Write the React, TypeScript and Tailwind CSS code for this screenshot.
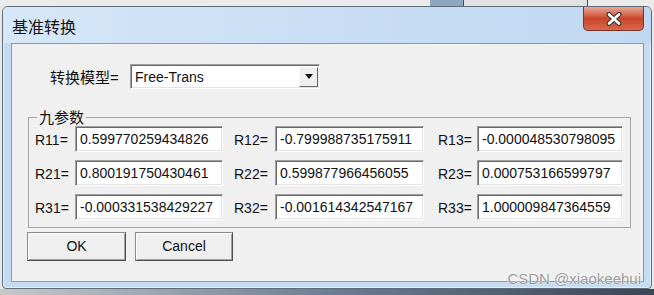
const SANS = "font-['Liberation_Sans','Arial',sans-serif]";
const CJK = "font-['Noto_Sans_CJK_SC','Liberation_Sans',sans-serif]";

const ROWS: { label: string; value: string }[][] = [
  [
    { label: "R11=", value: "0.599770259434826" },
    { label: "R12=", value: "-0.799988735175911" },
    { label: "R13=", value: "-0.000048530798095" },
  ],
  [
    { label: "R21=", value: "0.800191750430461" },
    { label: "R22=", value: "0.599877966456055" },
    { label: "R23=", value: "0.000753166599797" },
  ],
  [
    { label: "R31=", value: "-0.000331538429227" },
    { label: "R32=", value: "-0.001614342547167" },
    { label: "R33=", value: "1.000009847364559" },
  ],
];

// fixed column geometry, measured from the dialog
const COLS = [
  { gap: "", label: "w-[40px]", box: "w-[148px]" },
  { gap: "ml-[11px]", label: "w-[41px]", box: "w-[149px]" },
  { gap: "ml-[14px]", label: "w-[39px]", box: "w-[146px]" },
];

const sunken =
  "border border-t-[#a0a0a0] border-l-[#a0a0a0] border-r-white border-b-white shadow-[inset_1px_1px_0_#696969,inset_-1px_-1px_0_#e3e3e3] bg-white";

function TextBox({ value, width }: { value: string; width: string }) {
  return (
    <div className={`${width} h-[26px] ${sunken} flex items-center pl-[4px] overflow-hidden`}>
      <span className={`${SANS} text-[14px] leading-none text-[#111] whitespace-nowrap`}>{value}</span>
    </div>
  );
}

function Button({ label, width }: { label: string; width: string }) {
  return (
    <div
      className={`${width} h-[29px] flex items-center justify-center bg-[#efefef] border border-t-[#8a8a8a] border-l-[#8a8a8a] border-r-[#4f4f4f] border-b-[#4f4f4f] shadow-[inset_1px_1px_0_#ffffff,inset_-1px_-1px_0_#a0a0a0]`}
    >
      <span className={`${SANS} text-[14px] text-[#111]`}>{label}</span>
    </div>
  );
}

function CloseX() {
  return (
    <svg width="18" height="14" viewBox="0 0 18 14">
      <path d="M4 2.5 L14 11.5 M14 2.5 L4 11.5" stroke="#3b3b3b" strokeWidth="5" strokeLinecap="round" />
      <path d="M4 2.5 L14 11.5 M14 2.5 L4 11.5" stroke="#ffffff" strokeWidth="2.6" strokeLinecap="round" />
    </svg>
  );
}

export default function App() {
  return (
    <div className="w-[654px] h-[295px] overflow-hidden relative flex flex-col bg-[#e8e8e8]">
      {/* strip of the desktop above the dialog */}
      <div className="h-[6px] flex shrink-0">
        <div className="w-[430px] bg-[#ebebeb]" />
        <div className="w-[33px] bg-[#8fa6c0]" />
        <div className="w-[1px] bg-[#4d4d4d]" />
        <div className="w-[123px] bg-[#e2e2e2]" />
        <div className="w-[1px] bg-[#4d4d4d]" />
        <div className="flex-1 bg-[#ebebeb]" />
      </div>

      {/* dialog window */}
      <div className="ml-[2px] w-[650px] h-[283px] shrink-0 flex flex-col border border-[#5e6b78] rounded-t-[6px] rounded-b-[4px] bg-[#c4dbf2] shadow-[inset_0_0_0_1px_rgba(255,255,255,0.55)]">
        {/* title bar */}
        <div className="h-[36px] flex items-start rounded-t-[5px] bg-linear-to-r from-[#d6e7f8] via-[#c9def4] to-[#c0d8f1]">
          <span className={`${CJK} text-[16px] leading-none text-[#141414] pl-[9px] mt-[11px]`}>基准转换</span>
          <div className="ml-auto mr-[7px] w-[61px] h-[24px] flex items-center justify-center rounded-b-[5px] border border-t-0 border-[#7b3324] bg-linear-to-b from-[#e8a696] via-[#c8452b] to-[#d9674b]">
            <CloseX />
          </div>
        </div>

        {/* client area */}
        <div className="ml-[8px] w-[633px] h-[239px] border border-[#8c98a5] bg-[#f0f0f0] flex flex-col">
          <div className="flex items-center pl-[38px] pt-[20px]">
            <span className={`${CJK} w-[80px] text-[15px] leading-none text-[#111] whitespace-nowrap`}>
              转换模型<span className={SANS}>=</span>
            </span>
            <div className={`w-[190px] h-[25px] ${sunken} flex items-center justify-between pl-[4px] pr-[1px]`}>
              <span className={`${SANS} text-[14px] leading-none text-[#111]`}>Free-Trans</span>
              <div className="w-[19px] h-[20px] flex items-center justify-center bg-[#efefef] border border-t-[#f8f8f8] border-l-[#f8f8f8] border-r-[#6a6a6a] border-b-[#6a6a6a]">
                <svg width="8" height="5" viewBox="0 0 8 5">
                  <path d="M0 0 H8 L4 5 Z" fill="#111" />
                </svg>
              </div>
            </div>
          </div>

          <fieldset className="ml-[16px] mr-[12px] mt-[20px] border border-[#a5a5a5] pl-[6px] pb-[7px]">
            <legend className={`${CJK} ml-[2px] px-[2px] text-[15px] leading-[16px] text-[#111]`}>九参数</legend>
            <div className="flex flex-col gap-[8px] mt-[1px]">
              {ROWS.map((row, i) => (
                <div key={i} className="flex items-center">
                  {row.map((cell, j) => (
                    <div key={cell.label} className={`flex items-center ${COLS[j].gap}`}>
                      <span className={`${SANS} ${COLS[j].label} text-[14px] leading-none text-[#111] pt-[2px]`}>{cell.label}</span>
                      <TextBox value={cell.value} width={COLS[j].box} />
                    </div>
                  ))}
                </div>
              ))}
            </div>
          </fieldset>

          <div className="flex gap-[9px] ml-[15px] mt-[4px]">
            <Button label="OK" width="w-[99px]" />
            <Button label="Cancel" width="w-[98px]" />
          </div>
        </div>
      </div>

      {/* desktop below the dialog */}
      <div className="flex-1 bg-linear-to-r from-[#c8c8c8] via-[#6d7f95] to-[#3a4656]" />

      <span
        className={`${SANS} absolute right-[13px] bottom-[8px] text-[15px] leading-[16px] text-[#9a9a9a] [text-shadow:0_0_2px_#ffffff,0_0_1px_#ffffff]`}
      >
        CSDN @xiaokeehui
      </span>
    </div>
  );
}
